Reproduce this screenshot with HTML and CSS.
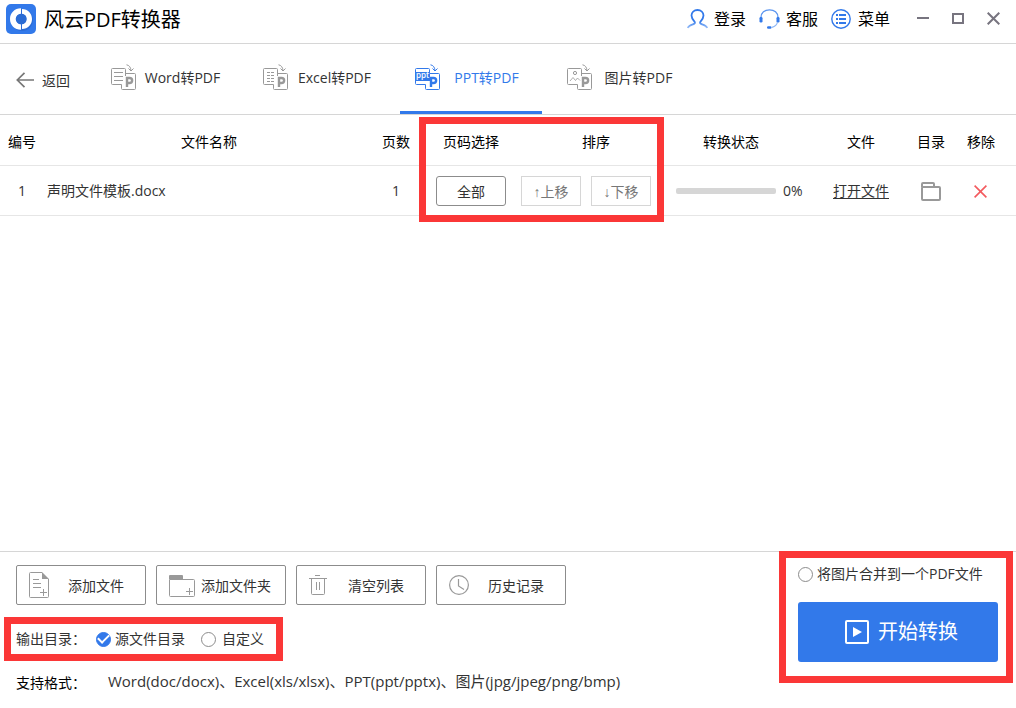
FILE: index.html
```html
<!DOCTYPE html>
<html lang="zh-CN">
<head>
<meta charset="utf-8">
<title>风云PDF转换器</title>
<link rel="stylesheet" href="styles.css">
</head>
<body>
<header class="titlebar">
  <svg class="logo" width="30" height="30" viewBox="0 0 30 30" aria-hidden="true">
    <rect width="30" height="30" rx="5" fill="#3279ea"/>
    <ellipse cx="16" cy="16" rx="11" ry="11" fill="#235fc4" opacity=".5"/>
    <path d="M15 4.200C8.500 4.200 4 9 4 15S8.500 25.800 15 25.800V20.300A5.300 5.300 0 0 1 15 9.700Z" fill="#fff"/>
    <path d="M16 5C22 5 26 9.500 26 15S22 25 16 25V20.200A5.300 5.300 0 0 0 16 9.800Z" fill="#fff"/>
    <circle cx="15.500" cy="15" r="5.200" fill="#2b6cd4"/>
  </svg>
  <h1 class="app-name">风云PDF转换器</h1>
  <nav class="account">
    <button class="account-item" type="button">
      <svg width="21" height="20" viewBox="0 0 21 20" fill="none" aria-hidden="true">
        <defs><linearGradient id="fade" x1="0" y1="0" x2="0" y2="20" gradientUnits="userSpaceOnUse"><stop offset=".6" stop-color="#3279ea"/><stop offset="1" stop-color="#a9c9fa"/></linearGradient></defs>
        <path d="M.8 19C1.500 16.500 4 16 6 15.300C8 14.600 8.500 13.700 7.300 12.300C5.500 10.300 4.500 8.700 4.500 6.600C4.500 3.300 7 1 10.500 1S16.500 3.300 16.500 6.600C16.500 8.700 15.500 10.300 13.700 12.300C12.500 13.700 13 14.600 15 15.300C17 16 19.500 16.500 20.200 19" stroke="url(#fade)" stroke-width="1.800"/>
      </svg>
      <span>登录</span>
    </button>
    <button class="account-item" type="button">
      <svg width="21" height="20" viewBox="0 0 21 20" fill="none" aria-hidden="true">
        <path d="M2 8.500C2 3.700 5.700 .8 10.500 .8S19 3.700 19 8.500" stroke="#5b95ef" stroke-width="1.300"/>
        <rect x="0.500" y="8" width="3" height="5.500" rx="1.200" fill="#3279ea"/>
        <rect x="17.500" y="8" width="3" height="5.500" rx="1.200" fill="#3279ea"/>
        <path d="M18.500 13C18 15.500 16 17.500 13 18.300" stroke="#8db6f5" stroke-width="1.200"/>
        <rect x="8" y="17.300" width="4.500" height="2.500" rx="1.200" fill="#3279ea"/>
      </svg>
      <span>客服</span>
    </button>
    <button class="account-item" type="button">
      <svg width="21" height="20" viewBox="0 0 21 20" fill="none" stroke="#3279ea" aria-hidden="true">
        <circle cx="10" cy="10" r="9.200" stroke-width="1.400"/>
        <path d="M5 6H7M8 6H15M5 10H7M8 10H15M5 14H7M8 14H15" stroke-width="1.800"/>
      </svg>
      <span>菜单</span>
    </button>
  </nav>
  <div class="window-controls">
    <button type="button" aria-label="最小化"><svg width="13" height="13" viewBox="0 0 13 13"><path d="M0 6H12" stroke="#77747f" stroke-width="2"/></svg></button>
    <button type="button" aria-label="最大化"><svg width="13" height="13" viewBox="0 0 13 13"><rect x="1" y="2" width="10" height="9" fill="none" stroke="#77747f" stroke-width="2"/></svg></button>
    <button type="button" aria-label="关闭"><svg width="13" height="13" viewBox="0 0 13 13"><path d="M.7 .7L12.300 12.300M12.300 .7L.7 12.300" stroke="#77747f" stroke-width="2"/></svg></button>
  </div>
</header>

<nav class="toolbar">
  <button class="back" type="button">
    <svg width="18" height="16" viewBox="0 0 18 16" fill="none" stroke="#777" stroke-width="1.700" aria-hidden="true"><path d="M1 8H18M8.500 .8L1.300 8L8.500 15.200"/></svg>
    <span>返回</span>
  </button>
  <div class="tabs">
    <button class="tab" type="button">
      <svg width="26" height="27" viewBox="0 0 26 27" fill="none" stroke="currentColor" aria-hidden="true">
        <path d="M14.500 12V5.500Q14.500 4.500 13.500 4.500H1.500Q.5 4.500 .5 5.500V19.500Q.5 20.500 1.500 20.500H10.500M14.500 9.500H23.500Q24.500 9.500 24.500 10.500V24.500Q24.500 25.500 23.500 25.500H11.500Q10.500 25.500 10.500 24.500V20.500M15.500 .8Q19.500 1.500 20 6.500M17.500 4.500L20 7L22.500 4.500"/>
        <path d="M3 8.500H12M3 12.500H12M3 16.500H12"/>
        <path d="M16 23V14H18.500C22 14 22 19 18.500 19H16" stroke-width="2.400"/>
      </svg>
      <span class="tab-label">Word转PDF</span>
    </button>
    <button class="tab" type="button">
      <svg width="26" height="27" viewBox="0 0 26 27" fill="none" stroke="currentColor" aria-hidden="true">
        <path d="M14.500 12V5.500Q14.500 4.500 13.500 4.500H1.500Q.5 4.500 .5 5.500V19.500Q.5 20.500 1.500 20.500H10.500M14.500 9.500H23.500Q24.500 9.500 24.500 10.500V24.500Q24.500 25.500 23.500 25.500H11.500Q10.500 25.500 10.500 24.500V20.500M15.500 .8Q19.500 1.500 20 6.500M17.500 4.500L20 7L22.500 4.500"/>
        <path d="M4 8.500H7M8 8.500H11M4 11.500H7M8 11.500H11M4 14.500H7M8 14.500H11M4 17.500H7M8 17.500H11"/>
        <path d="M16 23V14H18.500C22 14 22 19 18.500 19H16" stroke-width="2.400"/>
      </svg>
      <span class="tab-label">Excel转PDF</span>
    </button>
    <button class="tab active" type="button" aria-current="page">
      <svg width="26" height="27" viewBox="0 0 26 27" fill="none" stroke="currentColor" aria-hidden="true">
        <path d="M14.500 12V5.500Q14.500 4.500 13.500 4.500H1.500Q.5 4.500 .5 5.500V19.500Q.5 20.500 1.500 20.500H10.500M14.500 9.500H23.500Q24.500 9.500 24.500 10.500V24.500Q24.500 25.500 23.500 25.500H11.500Q10.500 25.500 10.500 24.500V20.500M15.500 .8Q19.500 1.500 20 6.500M17.500 4.500L20 7L22.500 4.500"/>
        <path d="M16 23V14H18.500C22 14 22 19 18.500 19H16" stroke-width="2.400"/>
        <path d="M0 8H15V17H0Z" fill="currentColor" stroke="none"/>
        <text class="icon-text" x="1" y="14">ppt</text>
      </svg>
      <span class="tab-label">PPT转PDF</span>
    </button>
    <button class="tab" type="button">
      <svg width="26" height="27" viewBox="0 0 26 27" fill="none" stroke="currentColor" aria-hidden="true">
        <path d="M14.500 12V5.500Q14.500 4.500 13.500 4.500H1.500Q.5 4.500 .5 5.500V19.500Q.5 20.500 1.500 20.500H10.500M14.500 9.500H23.500Q24.500 9.500 24.500 10.500V24.500Q24.500 25.500 23.500 25.500H11.500Q10.500 25.500 10.500 24.500V20.500M15.500 .8Q19.500 1.500 20 6.500M17.500 4.500L20 7L22.500 4.500"/>
        <circle cx="8" cy="9" r="1.600"/><path d="M3 17L6 13.500L8.500 16.500L10.500 14L13 16.500" stroke-width=".8"/>
        <path d="M16 23V14H18.500C22 14 22 19 18.500 19H16" stroke-width="2.400"/>
      </svg>
      <span class="tab-label">图片转PDF</span>
    </button>
  </div>
</nav>

<main class="files">
  <table class="file-table">
    <colgroup>
      <col class="c-index"><col><col class="c-pages"><col class="c-range"><col class="c-order"><col class="c-status"><col class="c-file"><col class="c-icon"><col class="c-icon"><col class="c-end">
    </colgroup>
    <thead>
      <tr><th>编号</th><th class="name-head">文件名称</th><th>页数</th><th>页码选择</th><th>排序</th><th class="status-head">转换状态</th><th>文件</th><th>目录</th><th>移除</th><th></th></tr>
    </thead>
    <tbody>
      <tr>
        <td>1</td>
        <td class="name">声明文件模板.docx</td>
        <td>1</td>
        <td><button class="range-btn" type="button">全部</button></td>
        <td><div class="order"><button class="order-btn" type="button">↑上移</button><button class="order-btn" type="button">↓下移</button></div></td>
        <td><div class="status"><div class="track" role="progressbar" aria-label="转换状态" aria-valuenow="0" aria-valuemin="0" aria-valuemax="100"></div><span>0%</span></div></td>
        <td><a class="open" href="#">打开文件</a></td>
        <td><button class="icon-btn" type="button" aria-label="打开目录"><svg width="20" height="19" viewBox="0 0 20 19" fill="none" stroke="#999" stroke-width="2"><path d="M1 5V2Q1 1 2 1H12Q13 1 13 2V5M2 5H18Q19 5 19 6V17Q19 18 18 18H2Q1 18 1 17V6Q1 5 2 5Z"/></svg></button></td>
        <td><button class="icon-btn" type="button" aria-label="移除"><svg width="14" height="13" viewBox="0 0 14 13" stroke="#f35a5e" stroke-width="1.600"><path d="M.6 .6L12.400 12.400M12.400 .6L.6 12.400"/></svg></button></td>
        <td></td>
      </tr>
    </tbody>
  </table>
  <div class="mark mark-order"></div>
</main>

<footer class="bottom">
  <div class="bottom-left">
    <div class="actions">
      <button class="action" type="button">
        <svg width="26" height="26" viewBox="0 0 26 26" fill="none" stroke="#999" aria-hidden="true"><path d="M13 .5H1.500Q.5 .5 .5 1.500V24.500Q.5 25.500 1.500 25.500H18.500Q19.500 25.500 19.500 24.500V7M4 7.500H10M4 11.500H12M4 15.500H12M11 20.500H18M14.500 17V24"/><path d="M13 0L20 7H13Z" fill="#999" stroke="none"/></svg>
        <span>添加文件</span>
      </button>
      <button class="action" type="button">
        <svg width="26" height="26" viewBox="0 0 26 26" fill="none" stroke="#999" aria-hidden="true"><path d="M0 4Q0 3 1 3H13Q14 3 14 4V7H0Z" fill="#999" stroke="none"/><path d="M.5 7.500H24.500Q25.500 7.500 25.500 8.500V23.500Q25.500 24.500 24.500 24.500H1.500Q.5 24.500 .5 23.500ZM17 19.500H24M20.500 16V23"/></svg>
        <span>添加文件夹</span>
      </button>
      <button class="action" type="button">
        <svg width="26" height="26" viewBox="0 0 26 26" fill="none" stroke="#999" aria-hidden="true"><path d="M0 6.500H18M6 3.500H11M2.500 7V21.500Q2.500 22.500 3.500 22.500H14.500Q15.500 22.500 15.500 21.500V7M7.500 10V18M10.500 10V18"/></svg>
        <span>清空列表</span>
      </button>
      <button class="action" type="button">
        <svg width="26" height="26" viewBox="0 0 26 26" fill="none" stroke="#999" aria-hidden="true"><circle cx="10" cy="13" r="9.400" stroke-width="1.200"/><path d="M9.500 7V14L15 17.500" stroke-width="1.200"/></svg>
        <span>历史记录</span>
      </button>
    </div>
    <div class="output" role="radiogroup" aria-label="输出目录">
      <span class="output-title">输出目录：</span>
      <label class="choice"><input type="radio" name="output" checked><span>源文件目录</span></label>
      <label class="choice custom"><input type="radio" name="output"><span>自定义</span></label>
      <div class="mark mark-output"></div>
    </div>
    <div class="formats"><span class="formats-title">支持格式：</span><span class="formats-list">Word(doc/docx)、Excel(xls/xlsx)、PPT(ppt/pptx)、图片(jpg/jpeg/png/bmp)</span></div>
  </div>
  <div class="bottom-right">
    <label class="choice"><input type="checkbox"><span>将图片合并到一个PDF文件</span></label>
    <button class="start" type="button">
      <svg width="24" height="24" viewBox="0 0 24 24" aria-hidden="true"><rect x="1" y="1" width="22" height="22" rx="1" fill="none" stroke="#fff" stroke-width="2"/><path d="M8 7L17 12L8 17Z" fill="#fff"/></svg>
      <span>开始转换</span>
    </button>
    <div class="mark mark-start"></div>
  </div>
</footer>
</body>
</html>
```

FILE: styles.css
```css
* {
  box-sizing: border-box;
}

body {
  margin: 0;
  min-height: 100vh;
  display: flex;
  flex-direction: column;
  background: #fff;
  color: #333;
  font: 14px/20px "Open Sans", "Noto Sans CJK SC", sans-serif;
}

button {
  margin: 0;
  padding: 0;
  border: 0;
  background: none;
  color: inherit;
  font: inherit;
  white-space: nowrap;
  cursor: pointer;
}

svg {
  display: block;
  flex: none;
}

/* Title bar */
.titlebar {
  display: flex;
  align-items: center;
  height: 44px;
  padding: 0 16px 6px 6px;
  border-bottom: 1px solid #d6d6d6;
  color: #000;
}

.app-name {
  flex: 1;
  margin: 0 0 0 8px;
  padding-top: 2px;
  font-size: 20px;
  line-height: 28px;
  font-weight: 400;
}

.account {
  display: flex;
  gap: 12px;
}

.account-item {
  display: flex;
  align-items: center;
  gap: 6px;
  width: 60px;
  font-size: 16px;
  line-height: 24px;
}

.window-controls {
  display: flex;
  gap: 22px;
  margin-left: 26px;
}

/* Converter tabs */
.toolbar {
  display: flex;
  height: 71px;
  border-bottom: 1px solid #d6d6d6;
}

.back {
  display: flex;
  align-items: center;
  gap: 8px;
  width: 96px;
  padding: 2px 0 0 16px;
}

.back span {
  padding-top: 2px;
}

.tabs {
  display: flex;
  gap: 10px;
}

.tab {
  display: flex;
  align-items: center;
  width: 142px;
  padding: 0 10px 0 15px;
  border-bottom: 3px solid transparent;
  color: #999;
}

.tab-label {
  flex: 1;
  color: #333;
  text-align: center;
}

.active {
  border-color: #3279ea;
  color: #3279ea;
}

.active .tab-label {
  color: #3279ea;
}

.icon-text {
  fill: #fff;
  stroke: none;
  font: 600 8px "Open Sans", sans-serif;
}

/* File list */
.files {
  position: relative;
  flex: 1;
}

.file-table {
  width: 100%;
  table-layout: fixed;
  border-collapse: collapse;
}

.c-index { width: 44px; }
.c-pages { width: 60px; }
.c-range { width: 90px; }
.c-order { width: 160px; }
.c-status { width: 140px; }
.c-file { width: 90px; }
.c-icon { width: 50px; }
.c-end { width: 10px; }

th,
td {
  height: 50px;
  padding: 2px 0 0;
  border-bottom: 1px solid #e6e6e6;
  text-align: center;
  vertical-align: middle;
}

th {
  padding-top: 4px;
  color: #000;
  font-weight: 400;
}

.name-head {
  padding-left: 8px;
}

.status-head {
  padding-right: 30px;
}

.name {
  padding-left: 3px;
  text-align: left;
}

.range-btn {
  width: 70px;
  height: 30px;
  padding-top: 2px;
  border: 1px solid #8c8c8c;
  border-radius: 3px;
}

.order {
  display: flex;
  gap: 10px;
  padding-left: 5px;
}

.order-btn {
  width: 60px;
  height: 30px;
  padding-top: 2px;
  border: 1px solid #d6d6d6;
  color: #777;
  font-family: "Liberation Sans", "Noto Sans CJK SC", sans-serif;
}

.status {
  display: flex;
  align-items: center;
  gap: 7px;
}

.track {
  width: 100px;
  height: 6px;
  border-radius: 2px;
  background: #d6d6d6;
}

.open {
  color: #333;
  text-underline-offset: 2px;
}

.icon-btn {
  display: block;
  margin: 0 auto;
}

/* Bottom panel */
.bottom {
  display: flex;
  justify-content: space-between;
  min-height: 157px;
  border-top: 1px solid #d6d6d6;
}

.bottom-left {
  padding: 13px 0 0 16px;
}

.actions {
  display: flex;
  gap: 10px;
}

.action {
  display: flex;
  align-items: center;
  width: 130px;
  height: 40px;
  padding: 0 8px 0 12px;
  border: 1px solid #8c8c8c;
  border-radius: 2px;
}

.action span {
  flex: 1;
  padding-top: 2px;
  text-align: center;
}

.output {
  position: relative;
  display: flex;
  align-items: center;
  height: 20px;
  margin-top: 24px;
}

.output-title {
  width: 80px;
}

.choice {
  display: flex;
  align-items: center;
  gap: 4px;
}

.custom {
  gap: 6px;
  margin-left: 16px;
}

.choice input {
  appearance: none;
  display: grid;
  place-items: center;
  flex: none;
  width: 15px;
  height: 15px;
  margin: 0;
  border: 1px solid #8c8c8c;
  border-radius: 50%;
}

.choice input:checked {
  border-color: #3279ea;
  background: #3279ea;
}

.choice input:checked::after {
  content: "";
  width: 9px;
  height: 5px;
  margin-bottom: 3px;
  border: solid #fff;
  border-width: 0 0 2px 2px;
  transform: rotate(-45deg);
}

.formats {
  display: flex;
  margin-top: 22px;
}

.formats-title {
  width: 92px;
  padding-top: 2px;
  color: #000;
}

.formats-list {
  font-size: 15px;
}

.bottom-right {
  position: relative;
  width: 218px;
  padding: 12px 18px 0 0;
}

.start {
  display: flex;
  align-items: center;
  justify-content: center;
  gap: 9px;
  width: 100%;
  height: 60px;
  margin-top: 18px;
  padding-left: 7px;
  border-radius: 3px;
  background: #3279ea;
  color: #fff;
  font-size: 20px;
  line-height: 28px;
}

/* Highlight frames drawn over the interface */
.mark {
  position: absolute;
  border: 7px solid #fb3737;
  pointer-events: none;
}

.mark-order {
  top: 2px;
  right: 352px;
  width: 245px;
  height: 105px;
}

.mark-output {
  top: -12px;
  left: -12px;
  width: 279px;
  height: 44px;
}

.mark-start {
  top: -1px;
  right: 3px;
  width: 234px;
  height: 132px;
}
```
